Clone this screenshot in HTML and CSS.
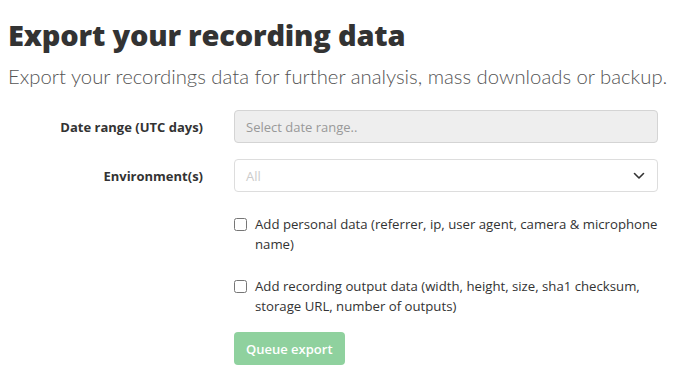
FILE: index.html
```html
<!DOCTYPE html>
<html lang="en">
<head>
    <meta charset="UTF-8">
    <meta name="viewport" content="width=device-width, initial-scale=1.0">
    <title>Export your recording data</title>
    <link rel="stylesheet" href="styles.css">
</head>
<body>
    <h1 class="title">Export your recording data</h1>
    <p class="lead">Export your recordings data for further analysis, mass downloads or backup.</p>

    <form class="export-form">
        <label class="form-label" for="dateRange">Date range (UTC days)</label>
        <input class="form-input readonly" id="dateRange" type="text" placeholder="Select date range.." readonly>

        <label class="form-label" for="envSelect">Environment(s)</label>
        <div class="select-box" id="envSelect">
            <span class="select-placeholder">All</span>
            <svg class="chevron" width="12" height="8" viewBox="0 0 12 8">
                <path d="M1.5 1.5 L6 6 L10.5 1.5" fill="none" stroke="#333" stroke-width="1.6" stroke-linecap="round" stroke-linejoin="round"/>
            </svg>
        </div>

        <div class="spacer"></div>
        <label class="check">
            <input type="checkbox">
            <span>Add personal data (referrer, ip, user agent, camera &amp; microphone name)</span>
        </label>

        <div class="spacer"></div>
        <label class="check">
            <input type="checkbox">
            <span>Add recording output data (width, height, size, sha1 checksum, storage URL, number of outputs)</span>
        </label>

        <div class="spacer"></div>
        <div>
            <button type="button" class="btn-queue" disabled>Queue export</button>
        </div>
    </form>
</body>
</html>
```

FILE: styles.css
```css
/* Page */
body {
    margin: 8px;
    font-family: "Open Sans", "Noto Sans", sans-serif;
    color: #212529;
    background: #fff;
}

.title {
    margin: 9px 0 0;
    font-size: 29px;
    font-weight: 800;
    letter-spacing: -0.2px;
    line-height: 36px;
    color: #333;
}

.lead {
    margin: 9px 0 0;
    font-family: "Lato", "Open Sans", sans-serif;
    font-size: 20.3px;
    font-weight: 300;
    line-height: 28px;
    color: #555;
    white-space: nowrap;
}

/* Form grid */
.export-form {
    display: grid;
    grid-template-columns: 195px 424px;
    column-gap: 31px;
    row-gap: 16px;
    margin-top: 20px;
    align-items: center;
}

.form-label {
    text-align: right;
    font-size: 13px;
    font-weight: 700;
    color: #333;
}

.form-input,
.select-box {
    box-sizing: border-box;
    height: 33px;
    width: 100%;
    padding: 0 11px;
    border: 1px solid #ddd;
    border-radius: 4px;
    font-family: inherit;
    font-size: 13px;
    background: #fff;
}

.form-input.readonly {
    background: #eee;
    border-color: #d4d4d4;
}

.form-input::placeholder {
    color: #999;
}

.select-box {
    display: flex;
    align-items: center;
    justify-content: space-between;
    padding-right: 12px;
}

.select-placeholder {
    color: #ccc;
}

/* Checkboxes */
.check {
    display: flex;
    align-items: flex-start;
    gap: 8px;
    font-size: 13.2px;
    line-height: 20px;
    color: #333;
    margin-top: 6px;
}

.check input {
    margin: 4px 0 0;
    width: 13px;
    height: 13px;
    flex: none;
}

.btn-queue {
    height: 33px;
    padding: 0 12px;
    background-color: #8fd19e;
    color: #fff;
    border: none;
    border-radius: 4px;
    font-family: inherit;
    font-size: 13px;
    font-weight: 600;
}
```
